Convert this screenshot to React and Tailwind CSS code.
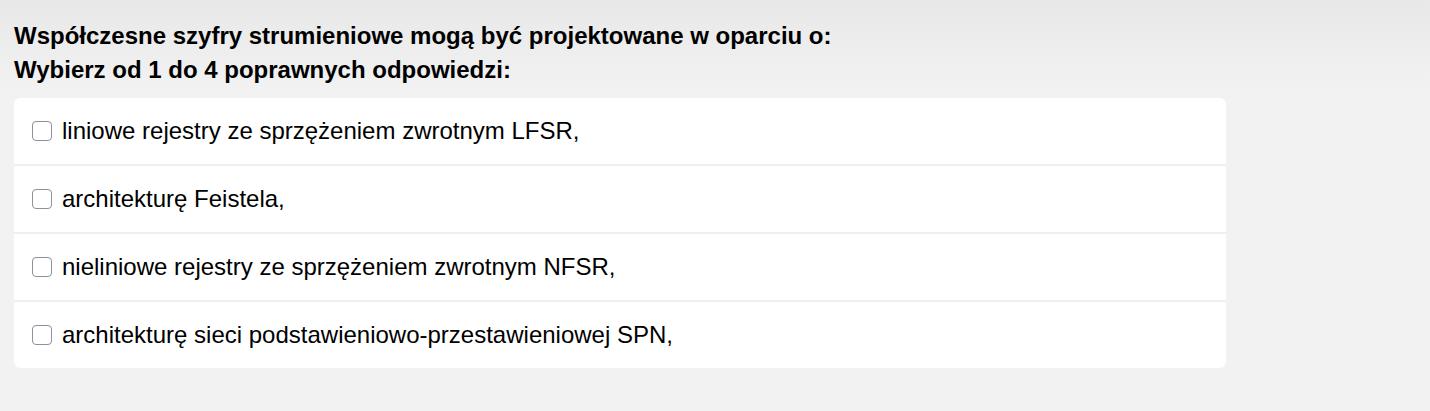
export default function App() {
  const options = [
    "liniowe rejestry ze sprzężeniem zwrotnym LFSR,",
    "architekturę Feistela,",
    "nieliniowe rejestry ze sprzężeniem zwrotnym NFSR,",
    "architekturę sieci podstawieniowo-przestawieniowej SPN,",
  ];
  return (
    <div
      className="w-[1430px] h-[411px] bg-[linear-gradient(to_bottom,#e8e8e8_0px,#f2f2f2_90px,#f2f2f2_100%)] text-black px-[14px] pt-[19px]"
      style={{ fontFamily: '"Liberation Sans", Arial, sans-serif' }}
    >
      <div className="text-[24px] font-bold leading-[34px]">
        <div>Współczesne szyfry strumieniowe mogą być projektowane w oparciu o:</div>
        <div>Wybierz od 1 do 4 poprawnych odpowiedzi:</div>
      </div>
      <div className="mt-[11px] w-[1212px] rounded-[6px] overflow-hidden flex flex-col gap-[2px] bg-[#efefef]">
        {options.map((o) => (
          <label key={o} className="h-[66px] bg-white flex items-center pl-[18px] gap-[10px] text-[24px]">
            <span className="w-[20px] h-[20px] rounded-[4px] border border-[#8f8f9d] bg-white shrink-0" />
            <span>{o}</span>
          </label>
        ))}
      </div>
    </div>
  );
}
